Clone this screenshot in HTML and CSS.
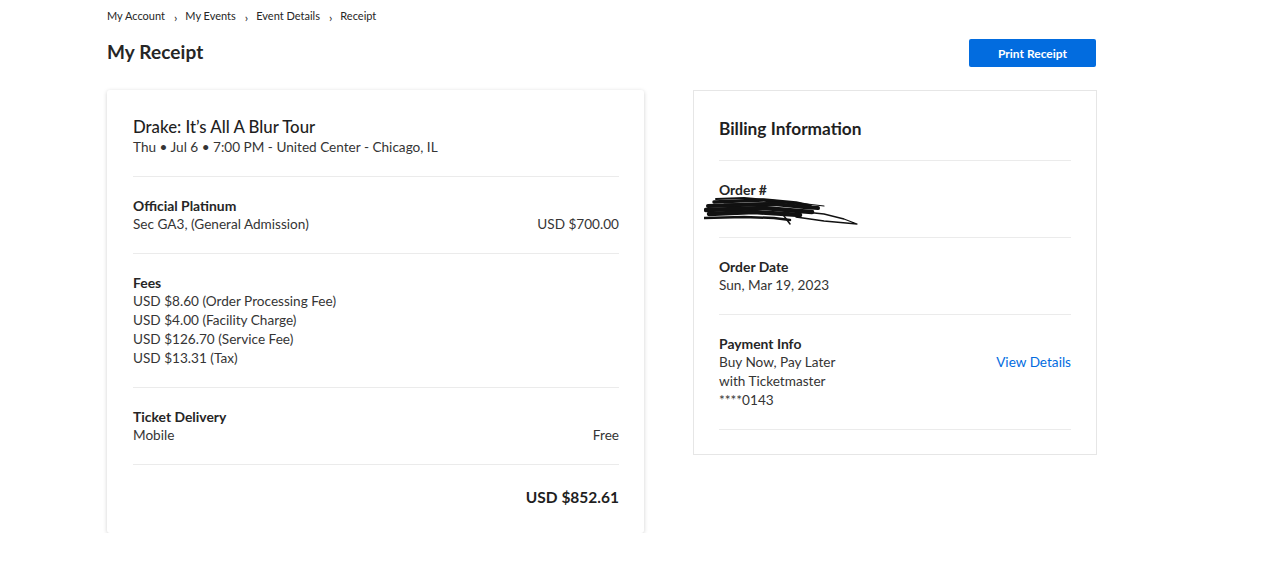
FILE: index.html
```html
<!DOCTYPE html>
<html>
<head>
<meta charset="utf-8">
<link rel="stylesheet" href="styles.css">
</head>
<body>
<div class="page">
  <nav class="crumbs">
    <span>My Account</span><span class="sep">›</span>
    <span>My Events</span><span class="sep">›</span>
    <span>Event Details</span><span class="sep">›</span>
    <span>Receipt</span>
  </nav>
  <header class="head">
    <h1 class="title">My Receipt</h1>
    <button class="print">Print Receipt</button>
  </header>
  <main class="cols">
    <section class="card receipt">
      <div class="sec first">
        <div class="event">Drake: It’s All A Blur Tour</div>
        <div class="line">Thu • Jul 6 • 7:00 PM - United Center - Chicago, IL</div>
      </div>
      <div class="sec">
        <div class="label">Official Platinum</div>
        <div class="row"><span>Sec GA3, (General Admission)</span><span>USD $700.00</span></div>
      </div>
      <div class="sec">
        <div class="label">Fees</div>
        <div class="line">USD $8.60 (Order Processing Fee)</div>
        <div class="line">USD $4.00 (Facility Charge)</div>
        <div class="line">USD $126.70 (Service Fee)</div>
        <div class="line">USD $13.31 (Tax)</div>
      </div>
      <div class="sec">
        <div class="label">Ticket Delivery</div>
        <div class="row"><span>Mobile</span><span>Free</span></div>
      </div>
      <div class="sec total">USD $852.61</div>
    </section>
    <section class="card billing">
      <div class="sec first">
        <div class="btitle">Billing Information</div>
      </div>
      <div class="sec">
        <div class="label">Order #</div>
        <div class="line redacted">
          <span class="hidden-num">00-00000/CHI</span>
          <svg class="scribble" width="160" height="32" viewBox="0 0 160 32">
            <g fill="none" stroke="#111" stroke-linecap="round" stroke-linejoin="round">
              <path d="M10 7 L60 5 L92 8 L106 11" stroke-width="3.5"/>
              <path d="M4 11 L70 9 L100 12 L114 13" stroke-width="4"/>
              <path d="M2 15 L60 13 L95 16 L108 17" stroke-width="4.5"/>
              <path d="M5 19 L50 17 L96 20" stroke-width="4.5"/>
              <path d="M0 23 L40 22 L70 23 L86 25" stroke-width="2.5"/>
              <path d="M12 4 L40 3 L72 6" stroke-width="2"/>
              <path d="M82 15 L120 19 L140 24 L153 29 L120 26 L92 22" stroke-width="1.3"/>
              <path d="M80 21 L86 29" stroke-width="1.5"/>
              <path d="M20 9 L86 7 L120 11" stroke-width="1.2"/>
            </g>
          </svg>
        </div>
      </div>
      <div class="sec">
        <div class="label">Order Date</div>
        <div class="line">Sun, Mar 19, 2023</div>
      </div>
      <div class="sec">
        <div class="label">Payment Info</div>
        <div class="row top">
          <div>
            <div class="line">Buy Now, Pay Later</div>
            <div class="line">with Ticketmaster</div>
            <div class="line">****0143</div>
          </div>
          <a class="link">View Details</a>
        </div>
      </div>
      <div class="sec empty"></div>
    </section>
  </main>
</div>
</body>
</html>
```
FILE: styles.css
```css
* { box-sizing: border-box; }
html, body { margin: 0; padding: 0; background: #fff; }
body {
  font-family: Lato, "Noto Sans", sans-serif;
  color: #262626;
}
.page {
  width: 990px;
  margin-left: 107px;
  padding-top: 8px;
}
.crumbs {
  display: flex;
  align-items: center;
  font-size: 11px;
  line-height: 16px;
  color: #262626;
}
.crumbs .sep {
  font-size: 12px;
  line-height: 12px;
  margin: 0 8px 0 9px;
  position: relative;
  top: 2px;
}
.head {
  display: flex;
  justify-content: space-between;
  align-items: center;
  margin-top: 14px;
}
.title {
  margin: 0;
  font-size: 19px;
  font-weight: 700;
  line-height: 26px;
  letter-spacing: 0.1px;
}
.print {
  width: 127px;
  height: 28px;
  background: #026cdf;
  color: #fff;
  border: none;
  border-radius: 2px;
  font-family: inherit;
  font-size: 12px;
  font-weight: 700;
  margin-right: 1px;
  position: relative;
  top: 1px;
}
.cols {
  display: grid;
  grid-template-columns: 537px 404px;
  column-gap: 49px;
  align-items: start;
  margin-top: 24px;
}
.card {
  background: #fff;
  padding: 0 25px 24px 26px;
}
.receipt {
  border-radius: 3px;
  box-shadow: 0 1px 4px rgba(0,0,0,0.18);
}
.billing {
  border: 1px solid #e6e6e6;
  padding: 0 25px 24px;
}
.sec {
  padding: 19px 0 19px;
  border-bottom: 1px solid #ebebeb;
  font-size: 13.6px;
  line-height: 19px;
}
.sec.first { padding-top: 26px; }
.sec.total, .sec.empty { border-bottom: none; }
.sec.empty { padding: 0; }
.event {
  font-size: 16.8px;
  line-height: 22px;
  font-weight: 500;
  color: #1f1f1f;
}
.btitle {
  font-size: 17.3px;
  line-height: 24px;
  font-weight: 700;
  color: #1f1f1f;
}
.label { font-weight: 700; color: #262626; font-size: 13.9px; }
.line { color: #353535; }
.row {
  display: flex;
  justify-content: space-between;
  color: #353535;
}
.row.top { align-items: flex-start; }
.total {
  text-align: right;
  font-size: 15.5px;
  line-height: 24px;
  font-weight: 700;
  padding-top: 20px;
  padding-bottom: 0;
  color: #1f1f1f;
}
.link { color: #026cdf; }
.redacted { position: relative; }
.hidden-num { visibility: hidden; }
.scribble {
  position: absolute;
  left: -15px;
  top: -4px;
}
```
